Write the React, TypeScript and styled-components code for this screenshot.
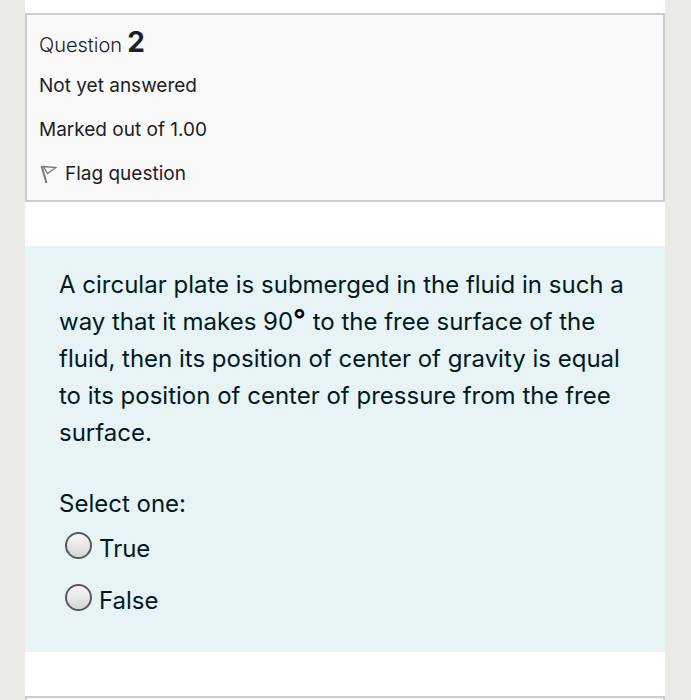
import React from "react";
import styled, { createGlobalStyle } from "styled-components";

const GlobalStyle = createGlobalStyle`
  * {
    box-sizing: border-box;
  }

  html {
    background: #ebeae6;
  }

  body {
    margin: 0;
    overflow: hidden;
    font-family: Inter, "Liberation Sans", sans-serif;
    color: #1d2125;
  }
`;

const Page = styled.main`
  display: flex;
  flex-direction: column;
  gap: 44px;
  height: 100vh;
  margin: 0 26px 0 25px;
  padding-top: 13px;
  overflow: hidden;
  background: #fff;
`;

const InfoCard = styled.section`
  flex: none;
  display: flex;
  flex-direction: column;
  align-items: flex-start;
  gap: 20px;
  padding: 12px 12px 14px;
  border: 2px solid #cbcdd2;
  background: #f9f9fa;
  font-size: 19px;
  line-height: 24px;
`;

const Heading = styled.h3`
  display: flex;
  align-items: baseline;
  gap: 5px;
  margin: 0 0 -6px;
  font-size: 20px;
  font-weight: 300;
  line-height: 30px;
`;

const QuestionNumber = styled.span`
  font-size: 28px;
  font-weight: 700;
`;

const InfoLine = styled.div``;

const FlagButton = styled.button`
  display: flex;
  align-items: center;
  gap: 8px;
  padding: 0;
  border: 0;
  background: none;
  color: inherit;
  font: inherit;
  cursor: pointer;
`;

const FlagIcon = styled.svg`
  width: 18px;
  height: 20px;
`;

const Formulation = styled.section`
  flex: none;
  padding: 20px 34px 26px;
  background: #e7f3f5;
  color: #001a1e;
  font-size: 24px;
  line-height: 37px;
`;

const QuestionText = styled.p`
  margin: 0 0 35px;
`;

const Degree = styled.span`
  color: #000;
  font-size: 28px;
  font-weight: 600;
  line-height: 24px;
`;

const Answers = styled.fieldset`
  margin: 0;
  padding: 0;
  border: 0;
`;

const Prompt = styled.legend`
  padding: 0;
  line-height: 36px;
`;

const Option = styled.label`
  display: flex;
  align-items: center;
  gap: 7px;
  height: 52px;
  padding-left: 6px;
  cursor: pointer;
`;

const Radio = styled.input`
  appearance: none;
  width: 27px;
  height: 27px;
  margin: 0 0 5px;
  border: 2px solid #555a5e;
  border-radius: 50%;
  background: linear-gradient(#f8f8f8, #d5d5d5);

  &:checked {
    background: radial-gradient(#333 35%, #e4e4e4 40%);
  }
`;

const answers = ["True", "False"];

export default function App() {
  return (
    <>
      <GlobalStyle />
      <Page>
        <InfoCard>
          <Heading>
            <span>Question</span>
            <QuestionNumber>2</QuestionNumber>
          </Heading>
          <InfoLine>Not yet answered</InfoLine>
          <InfoLine>Marked out of 1.00</InfoLine>
          <FlagButton type="button">
            <FlagIcon viewBox="0 0 18 20" fill="none" stroke="#77797b" aria-hidden="true">
              <path d="M2.5 2 7.5 19" strokeWidth="2" />
              <path d="M4.5 2.5 17 3.5 8.5 9.5Z" strokeWidth="1.3" />
            </FlagIcon>
            Flag question
          </FlagButton>
        </InfoCard>
        <Formulation>
          <QuestionText>
            A circular plate is submerged in the fluid in such a way that it
            makes 90<Degree>°</Degree> to the free surface of the fluid, then
            its position of center of gravity is equal to its position of
            center of pressure from the free surface.
          </QuestionText>
          <Answers>
            <Prompt>Select one:</Prompt>
            {answers.map((answer) => (
              <Option key={answer}>
                <Radio type="radio" name="answer" value={answer} />
                {answer}
              </Option>
            ))}
          </Answers>
        </Formulation>
        <InfoCard aria-label="Next question" />
      </Page>
    </>
  );
}
